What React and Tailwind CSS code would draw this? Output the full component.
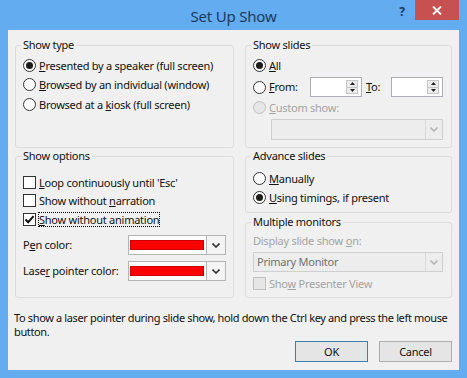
import React from "react";

function Radio({ checked, disabled }) {
  return (
    <span
      className={
        "flex h-[13px] w-[13px] shrink-0 items-center justify-center rounded-full border " +
        (disabled ? "border-[#c2c2c2] bg-[#e6e6e6]" : "border-[#333] bg-white")
      }
    >
      {checked && <span className="h-[7px] w-[7px] rounded-full bg-[#1c1c1c]" />}
    </span>
  );
}

function Check({ checked, disabled }) {
  return (
    <span
      className={
        "flex h-[13px] w-[13px] shrink-0 items-center justify-center border " +
        (disabled ? "border-[#c2c2c2] bg-[#e6e6e6]" : "border-[#333] bg-white")
      }
    >
      {checked && (
        <svg width="11" height="11" viewBox="0 0 11 11">
          <path d="M1.5 5.5 L4.2 8.2 L9.5 2.2" fill="none" stroke="#111" strokeWidth="2" />
        </svg>
      )}
    </span>
  );
}

function Chevron({ color = "#333" }) {
  return (
    <svg width="8" height="5" viewBox="0 0 8 5">
      <path d="M0.5 0.5 L4 4 L7.5 0.5" fill="none" stroke={color} strokeWidth="1.6" />
    </svg>
  );
}

function Option({ control, focus, disabled, h = "h-[19.5px]", children }) {
  return (
    <div className={"flex items-center " + h}>
      {control}
      <span
        className={
          "ml-[2px] border px-0 leading-[13px] " +
          (focus ? "border-dotted border-black " : "border-transparent ") +
          (disabled ? "text-[#a3a3a3]" : "")
        }
      >
        {children}
      </span>
    </div>
  );
}

function Group({ title, className, children }) {
  return (
    <fieldset className={"min-w-0 rounded-[3px] border border-[#dcdcdc] px-[7px] " + className}>
      <legend className="-ml-[2px] px-[2px] leading-[16px]">{title}</legend>
      {children}
    </fieldset>
  );
}

function Spin() {
  return (
    <div className="flex h-[20px] w-[52px] justify-end border border-[#abadb3] bg-white py-[2px] pr-[3px]">
      <div className="flex w-[12px] flex-col border border-[#c6c6c6] bg-[#ececec]">
        <div className="flex flex-1 items-center justify-center border-b border-[#c6c6c6]">
          <svg width="5" height="3" viewBox="0 0 5 3">
            <path d="M0 3 L2.5 0 L5 3 Z" fill="#222" />
          </svg>
        </div>
        <div className="flex flex-1 items-center justify-center">
          <svg width="5" height="3" viewBox="0 0 5 3">
            <path d="M0 0 L2.5 3 L5 0 Z" fill="#222" />
          </svg>
        </div>
      </div>
    </div>
  );
}

function ColorPick() {
  return (
    <div className="flex h-[20px] w-[98px] border border-[#b4b4b4] bg-white">
      <div className="my-[4px] ml-[1px] mr-[2px] flex-1 border border-[#c00] bg-[#ff0000]" />
      <div className="flex w-[19px] items-center justify-center border-l border-[#b4b4b4] bg-[#f4f4f4]">
        <Chevron />
      </div>
    </div>
  );
}

function DisabledCombo({ w, h, text }) {
  return (
    <div className={"flex border border-[#cfcfcf] bg-[#ededed] " + w + " " + h}>
      <div className="flex flex-1 items-center pl-[3px] text-[#707070]">{text}</div>
      <div className="flex w-[17px] items-center justify-center border-l border-[#dadada]">
        <Chevron color="#b5b5b5" />
      </div>
    </div>
  );
}

export default function App() {
  return (
    <div className="flex h-[378px] w-[467px] flex-col bg-[#62acef] font-['Noto_Sans',sans-serif] text-[11px] text-[#111]">
      <div className="grid h-[30px] grid-cols-[1fr_auto_1fr]">
        <div />
        <div className="pt-[5px] text-[15px] leading-[22px] tracking-[-0.2px] text-[#1e3b5e]">Set Up Show</div>
        <div className="flex items-start justify-end pr-[8px]">
          <span className="mr-[10px] mt-[4px] text-[12px] font-bold leading-[16px] text-[#1e3b5e]">?</span>
          <div className="flex h-[20px] w-[44px] items-center justify-center bg-[#c75050]">
            <svg width="10" height="9" viewBox="0 0 10 9">
              <path d="M1 0.5 L9 8.5 M9 0.5 L1 8.5" stroke="white" strokeWidth="1.8" />
            </svg>
          </div>
        </div>
      </div>

      <div className="mx-[8px] flex h-[340px] flex-col bg-[#f0f0f0] px-[7px] pt-[7px] tracking-[-0.25px]">
        <div className="flex gap-[11px]">
          <Group title="Show type" className="h-[111px] w-[219px]">
            <div className="pt-[2.5px]">
              <Option control={<Radio checked />}>
                <u>P</u>resented by a speaker (full screen)
              </Option>
              <Option control={<Radio />}>
                <u>B</u>rowsed by an individual (window)
              </Option>
              <Option control={<Radio />}>
                Browsed at a <u>k</u>iosk (full screen)
              </Option>
            </div>
          </Group>

          <Group title="Show slides" className="h-[111px] w-[207px]">
            <div className="pt-[2.5px]">
              <Option control={<Radio checked />}>
                <u>A</u>ll
              </Option>
              <div className="mt-[2px] flex h-[20px] items-center">
                <Radio />
                <span className="ml-[3px] w-[41px]">
                  <u>F</u>rom:
                </span>
                <Spin />
                <span className="ml-[4px] w-[25px]">
                  <u>T</u>o:
                </span>
                <Spin />
              </div>
              <Option control={<Radio disabled />} disabled h="h-[21px]">
                <u>C</u>ustom show:
              </Option>
              <div className="ml-[18px] mt-[1px]">
                <DisabledCombo w="w-[172px]" h="h-[21px]" text="" />
              </div>
            </div>
          </Group>
        </div>

        <div className="flex gap-[11px]">
          <Group title="Show options" className="h-[150px] w-[219px]">
            <div className="pt-[8.75px]">
              <Option control={<Check />} h="h-[18.5px]">
                <u>L</u>oop continuously until 'Esc'
              </Option>
              <Option control={<Check />} h="h-[18.5px]">
                Show without <u>n</u>arration
              </Option>
              <Option control={<Check checked />} focus h="h-[18.5px]">
                <u>S</u>how without animation
              </Option>
              <div className="mt-[6.75px] flex h-[20px] items-center">
                <span className="w-[105px]">
                  P<u>e</u>n color:
                </span>
                <ColorPick />
              </div>
              <div className="mt-[6px] flex h-[20px] items-center">
                <span className="w-[105px]">
                  Lase<u>r</u> pointer color:
                </span>
                <ColorPick />
              </div>
            </div>
          </Group>

          <div className="flex w-[207px] flex-col">
            <Group title="Advance slides" className="h-[65px] w-[207px]">
              <div className="pt-[4.5px]">
                <Option control={<Radio />} h="h-[19px]">
                  <u>M</u>anually
                </Option>
                <Option control={<Radio checked />} h="h-[19px]">
                  <u>U</u>sing timings, if present
                </Option>
              </div>
            </Group>
            <Group title="Multiple monitors" className="mt-[1px] h-[84px] w-[207px]">
              <div className="pt-[2px]">
                <div className="flex h-[18px] items-center text-[#a3a3a3]">
                  Display slide show <u className="ml-[3px]">o</u>n:
                </div>
                <div className="mt-[2px]">
                  <DisabledCombo w="w-[190px]" h="h-[20px]" text="Primary Monitor" />
                </div>
                <div className="mt-[2px]">
                  <Option control={<Check disabled />} disabled h="h-[18px]">
                    Sho<u>w</u> Presenter View
                  </Option>
                </div>
              </div>
            </Group>
          </div>
        </div>

        <p className="-ml-[1px] mt-[13px] whitespace-nowrap leading-[14px] tracking-[-0.36px]">
          To show a laser pointer during slide show, hold down the Ctrl key and press the left mouse
          <br />
          button.
        </p>

        <div className="mt-[2px] flex justify-end gap-[11px]">
          <button className="h-[21px] w-[73px] border border-[#3c7fb1] bg-[#e5e5e5] leading-[19px]">OK</button>
          <button className="h-[21px] w-[73px] border border-[#adadad] bg-[#e5e5e5] leading-[19px]">Cancel</button>
        </div>
      </div>
    </div>
  );
}
